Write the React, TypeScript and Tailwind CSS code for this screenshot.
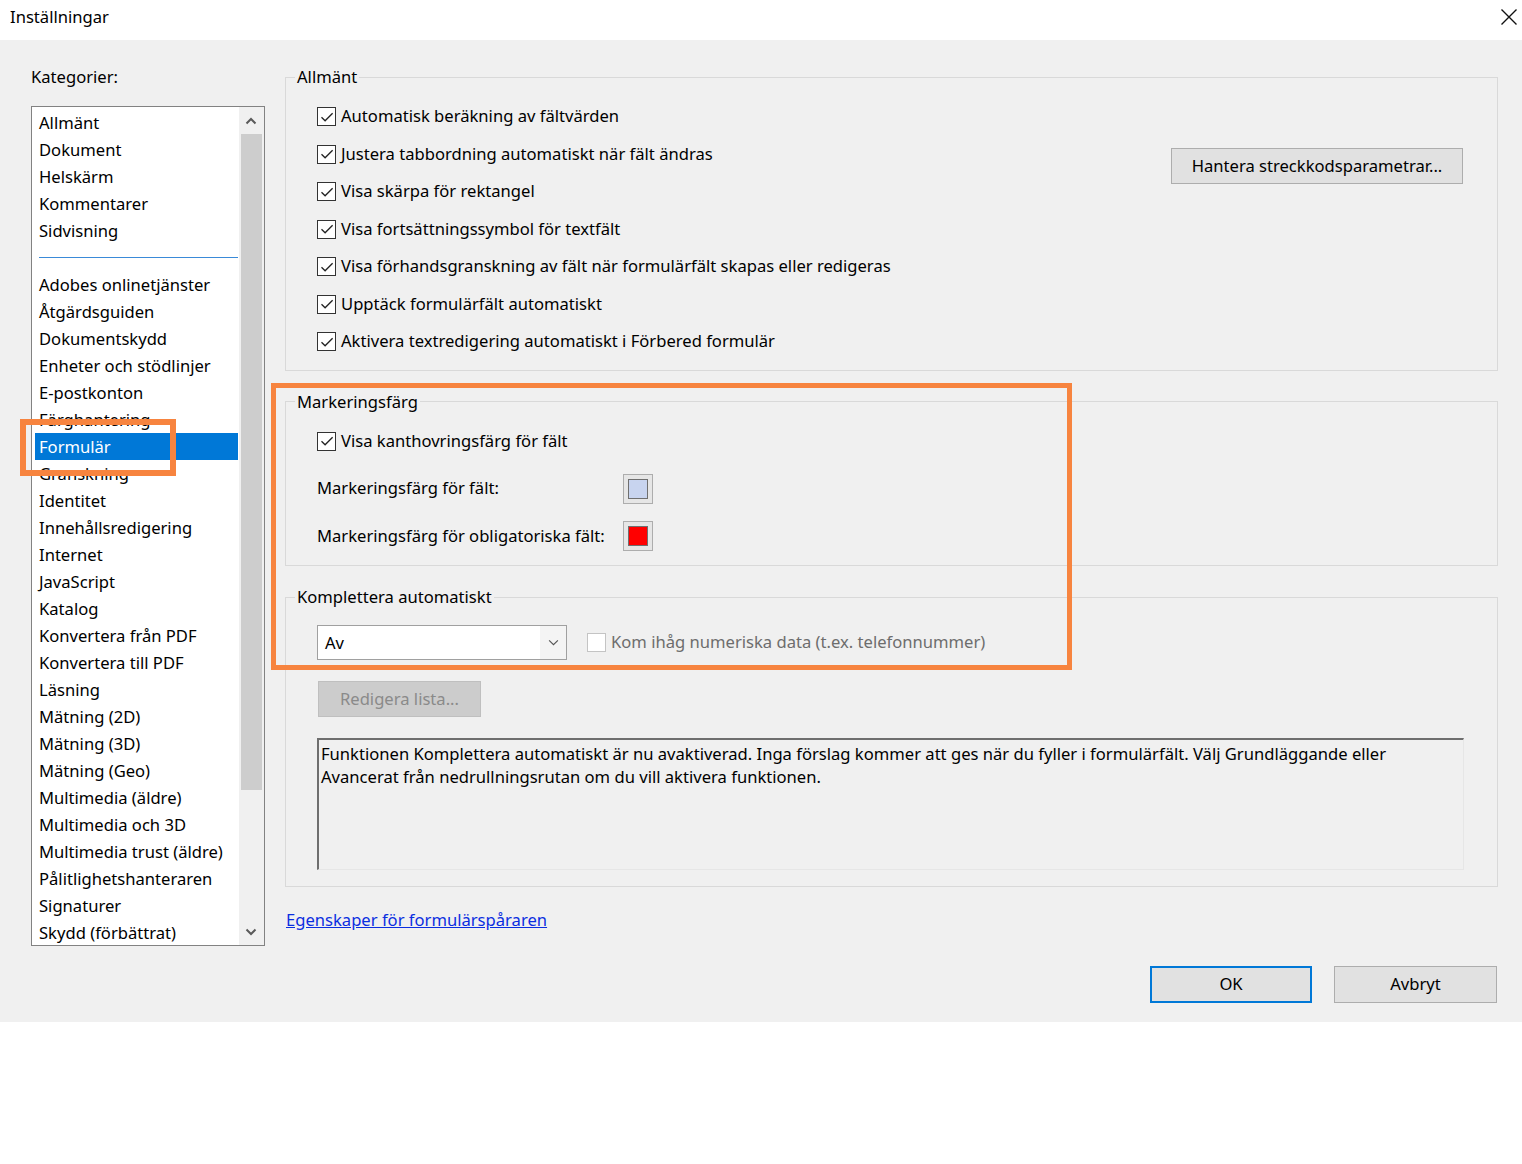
import React from "react";

const categories = [
  "Allmänt",
  "Dokument",
  "Helskärm",
  "Kommentarer",
  "Sidvisning",
  "-",
  "Adobes onlinetjänster",
  "Åtgärdsguiden",
  "Dokumentskydd",
  "Enheter och stödlinjer",
  "E-postkonton",
  "Färghantering",
  "Formulär",
  "Granskning",
  "Identitet",
  "Innehållsredigering",
  "Internet",
  "JavaScript",
  "Katalog",
  "Konvertera från PDF",
  "Konvertera till PDF",
  "Läsning",
  "Mätning (2D)",
  "Mätning (3D)",
  "Mätning (Geo)",
  "Multimedia (äldre)",
  "Multimedia och 3D",
  "Multimedia trust (äldre)",
  "Pålitlighetshanteraren",
  "Signaturer",
  "Skydd (förbättrat)",
];

const generalOptions = [
  "Automatisk beräkning av fältvärden",
  "Justera tabbordning automatiskt när fält ändras",
  "Visa skärpa för rektangel",
  "Visa fortsättningssymbol för textfält",
  "Visa förhandsgranskning av fält när formulärfält skapas eller redigeras",
  "Upptäck formulärfält automatiskt",
  "Aktivera textredigering automatiskt i Förbered formulär",
];

function CheckBox({ checked = true, disabled = false }: { checked?: boolean; disabled?: boolean }) {
  return (
    <span
      className={`flex h-[19px] w-[19px] shrink-0 items-center justify-center border bg-white ${
        disabled ? "border-[#c4c4c4]" : "border-[#333333]"
      }`}
    >
      {checked && (
        <svg viewBox="0 0 16 16" className="h-[16px] w-[16px]">
          <path d="M2.5 8.2l3.6 3.6L13.6 4.2" fill="none" stroke="#222222" strokeWidth="1.3" />
        </svg>
      )}
    </span>
  );
}

function CheckRow({ label }: { label: string }) {
  return (
    <div className="flex h-[37.5px] items-center">
      <CheckBox />
      <span className="ml-[5px]">{label}</span>
    </div>
  );
}

function Swatch({ fill }: { fill: string }) {
  return (
    <span className="flex h-[30px] w-[30px] items-center justify-center border border-[#adadad] bg-[#e6e6e6]">
      <span className={`h-[20px] w-[20px] border border-[#6f6f6f] ${fill}`} />
    </span>
  );
}

function Group({
  title,
  className,
  children,
}: {
  title: string;
  className?: string;
  children: React.ReactNode;
}) {
  return (
    <fieldset className={`min-w-0 border border-[#d9d9d9] px-[9px] ${className ?? ""}`}>
      <legend className="px-[2px] leading-[22px]">{title}</legend>
      <div className="pl-[22px]">{children}</div>
    </fieldset>
  );
}

function Chevron({ up, className }: { up?: boolean; className?: string }) {
  return (
    <svg viewBox="0 0 12 8" className={className}>
      <path
        d={up ? "M1.5 6.5L6 2l4.5 4.5" : "M1.5 1.5L6 6l4.5-4.5"}
        fill="none"
        stroke="#5a5a5a"
        strokeWidth="2"
      />
    </svg>
  );
}

function CategoryList() {
  return (
    <div className="mt-[18px] flex h-[840px] border border-[#828282] bg-white">
      <div className="flex-1 overflow-hidden pt-[1.5px]">
        {categories.map((name, i) =>
          name === "-" ? (
            <div key={i} className="flex h-[27px] items-center pl-[7px] pr-[1px]">
              <div className="h-px w-full bg-[#3a8ad8]" />
            </div>
          ) : name === "Formulär" ? (
            <div key={i} className="ml-[3px] mr-[1px] h-[27px] bg-[#0078d7] pl-[4px] leading-[27px] text-white">
              {name}
            </div>
          ) : (
            <div key={i} className="h-[27px] whitespace-nowrap pl-[7px] leading-[27px]">
              {name}
            </div>
          )
        )}
      </div>
      <div className="flex w-[25px] flex-col bg-[#f0f0f0]">
        <div className="flex h-[27px] items-center justify-center pr-[2px]">
          <Chevron up className="h-[8px] w-[12px]" />
        </div>
        <div className="mx-[2px] h-[656px] bg-[#cdcdcd]" />
        <div className="flex-1" />
        <div className="flex h-[27px] items-center justify-center pr-[2px]">
          <Chevron className="h-[8px] w-[12px]" />
        </div>
      </div>
    </div>
  );
}

export default function App() {
  return (
    <div className="relative h-[1164px] w-full bg-white font-['Noto_Sans',sans-serif] text-[16.6px] text-black">
      {/* title bar */}
      <div className="flex h-[40px] items-start justify-between pl-[10px] pr-[4px] pt-[6px]">
        <span className="leading-[22px]">Inställningar</span>
        <svg viewBox="0 0 18 18" className="mt-[2px] h-[18px] w-[18px]">
          <path d="M1.5 1.5l15 15M16.5 1.5l-15 15" stroke="#111111" strokeWidth="1.4" />
        </svg>
      </div>

      {/* dialog body */}
      <div className="flex h-[982px] bg-[#f0f0f0] pl-[31px] pr-[24px] pt-[26px]">
        <div className="w-[234px] shrink-0">
          <div className="leading-[22px]">Kategorier:</div>
          <CategoryList />
        </div>

        <div className="ml-[20px] flex flex-1 flex-col">
          <Group title="Allmänt" className="pb-[9px] pt-[10px]">
            <div className="flex items-start justify-between">
              <div>
                {generalOptions.map((o) => (
                  <CheckRow key={o} label={o} />
                ))}
              </div>
              <button className="mr-[25px] mt-[50px] h-[36px] w-[292px] border border-[#adadad] bg-[#e1e1e1]">
                Hantera streckkodsparametrar...
              </button>
            </div>
          </Group>

          <Group title="Markeringsfärg" className="mt-[20px] pb-[5px] pt-[5px]">
            <div className="flex h-[47.5px] items-center">
              <CheckBox />
              <span className="ml-[5px]">Visa kanthovringsfärg för fält</span>
            </div>
            <div className="flex h-[47.5px] items-center">
              <span className="w-[306px]">Markeringsfärg för fält:</span>
              <Swatch fill="bg-[#c8d4ef]" />
            </div>
            <div className="flex h-[47.5px] items-center">
              <span className="w-[306px]">Markeringsfärg för obligatoriska fält:</span>
              <Swatch fill="bg-[#ff0000]" />
            </div>
          </Group>

          <Group title="Komplettera automatiskt" className="mt-[20px] pb-[16px] pt-[17px]">
            <div className="flex items-center">
              <div className="flex h-[35px] w-[250px] border border-[#a0a0a0] bg-white">
                <span className="flex-1 pl-[7px] leading-[33px]">Av</span>
                <span className="flex w-[26px] items-center justify-center bg-[#f4f4f4]">
                  <svg viewBox="0 0 12 8" className="h-[7px] w-[11px]">
                    <path d="M1 1.5L6 6.5l5-5" fill="none" stroke="#555555" strokeWidth="1.3" />
                  </svg>
                </span>
              </div>
              <span className="ml-[20px]">
                <CheckBox checked={false} disabled />
              </span>
              <span className="ml-[5px] text-[#6d6d6d]">Kom ihåg numeriska data (t.ex. telefonnummer)</span>
            </div>
            <button
              disabled
              className="ml-[1px] mt-[21px] h-[36px] w-[163px] border border-[#bfbfbf] bg-[#cccccc] text-[#8a8a8a]"
            >
              Redigera lista...
            </button>
            <div className="mt-[21px] h-[132px] w-[1147px] whitespace-nowrap border-l-2 border-t-2 border-b border-r border-l-[#6e6e6e] border-t-[#6e6e6e] border-b-[#e6e6e6] border-r-[#e6e6e6] pl-[2px] pt-[2px] leading-[23px]">
              Funktionen Komplettera automatiskt är nu avaktiverad. Inga förslag kommer att ges när du fyller i
              formulärfält. Välj Grundläggande eller
              <br />
              Avancerat från nedrullningsrutan om du vill aktivera funktionen.
            </div>
          </Group>

          <a href="#" className="ml-[1px] mt-[22px] self-start leading-[22px] text-[#0b2ee0] underline">
            Egenskaper för formulärspåraren
          </a>

          <div className="mt-[35px] flex justify-end gap-[22px] pr-[1px]">
            <button className="h-[37px] w-[162px] border-2 border-[#0078d7] bg-[#e1e1e1]">OK</button>
            <button className="h-[37px] w-[163px] border border-[#adadad] bg-[#e1e1e1]">Avbryt</button>
          </div>
        </div>
      </div>

      {/* callout frames drawn over the dialog */}
      <div className="pointer-events-none absolute left-[20px] top-[419px] h-[57px] w-[156px] border-[6px] border-[#f7843f]" />
      <div className="pointer-events-none absolute left-[271px] top-[383px] h-[287px] w-[801px] border-[5px] border-[#f7843f]" />
    </div>
  );
}
